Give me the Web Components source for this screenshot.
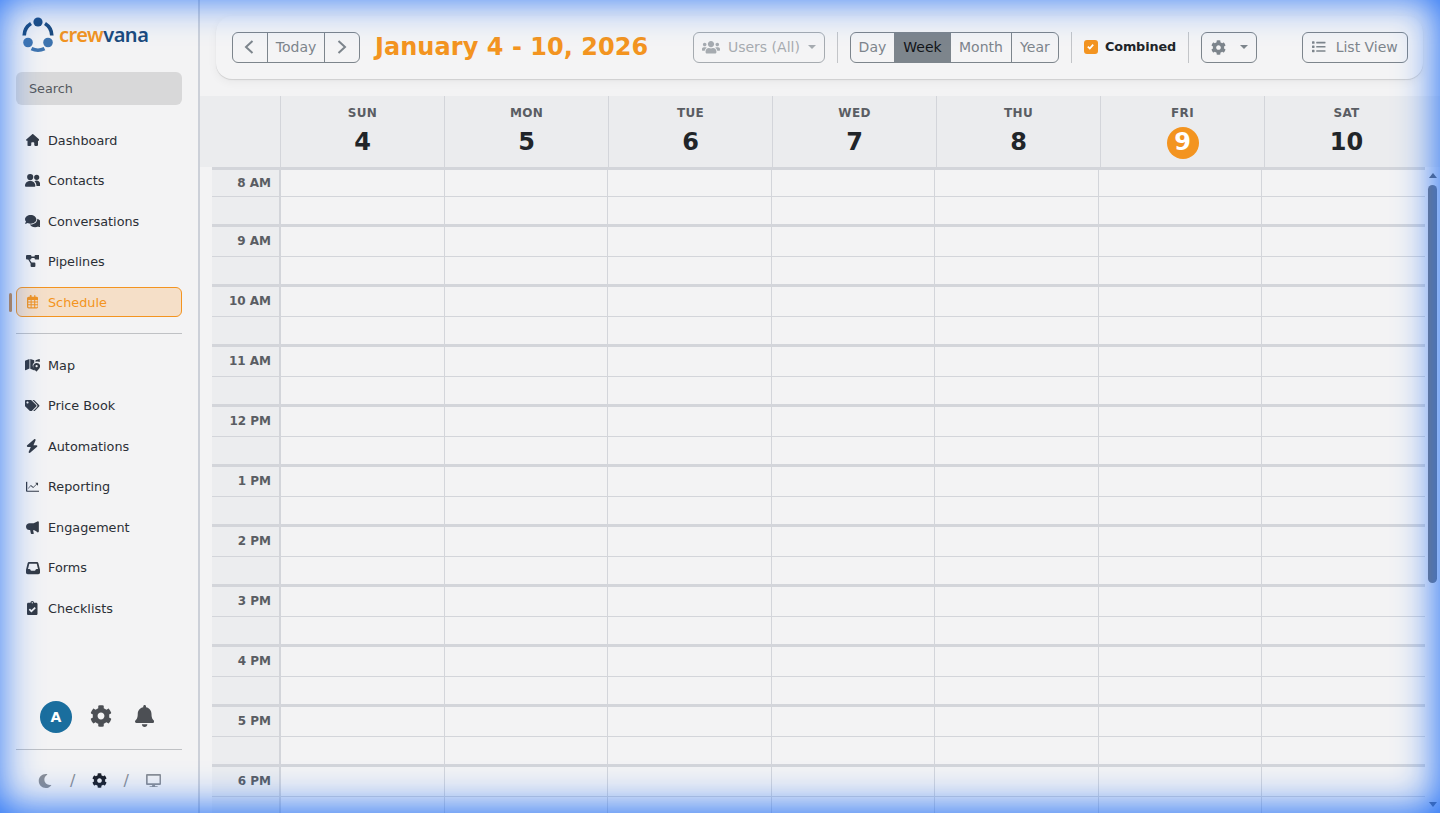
<!DOCTYPE html>
<html lang="en">
<head>
<meta charset="utf-8">
<title>Schedule</title>
<style>
  html, body { margin: 0; height: 100%; overflow: hidden; background: #f3f3f4; }
  body { font-family: "DejaVu Sans", sans-serif; color: #212529; }
</style>
</head>
<body>
<app-shell>
  <app-sidebar slot="side"></app-sidebar>
  <cal-toolbar slot="main"></cal-toolbar>
  <cal-header slot="main"></cal-header>
  <cal-body slot="main"></cal-body>
</app-shell>
<glow-frame></glow-frame>

<script>
// [viewBox width, path, viewBox height (512 when left out)]
const ICONS = {
  home: [576, 'M575.8 255.5c0 18-15 32.1-32 32.1h-32l.7 160.2c0 2.7-.2 5.4-.5 8.1V472c0 22.1-17.9 40-40 40H456c-1.1 0-2.2 0-3.3-.1c-1.4 .1-2.8 .1-4.2 .1H416 392c-22.1 0-40-17.9-40-40V448 384c0-17.7-14.3-32-32-32H256c-17.7 0-32 14.3-32 32v64 24c0 22.1-17.9 40-40 40H160 128.1c-1.5 0-3-.1-4.5-.2c-1.2 .1-2.4 .2-3.6 .2H104c-22.1 0-40-17.9-40-40V360c0-.9 0-1.9 .1-2.8V287.6H32c-18 0-32-14-32-32.1c0-9 3-17 10-24L266.4 8c7-7 15-8 22-8s15 2 21 7L564.8 231.5c8 7 12 15 11 24z'],
  friends: [15.3, 'M5.2 0a3.1 3.1 0 1 1 0 6.2a3.1 3.1 0 1 1 0-6.2zM0 11.8c0-2.9 2.3-4.9 5.2-4.9s5.2 2 5.2 4.9c0 .5-.3.9-.8.9H.8c-.5 0-.8-.4-.8-.9zM11.7.7a2.6 2.6 0 1 1 0 5.2a2.6 2.6 0 1 1 0-5.2zM11.7 6.6c2.2 0 3.6 1.7 3.6 4.3 0 .6-.3 1-.8 1h-3c0-2-.8-3.7-2.1-4.7.6-.4 1.4-.6 2.3-.6z', 12.7],
  users: [640, 'M96 224c35.3 0 64-28.7 64-64s-28.7-64-64-64-64 28.7-64 64 28.7 64 64 64zm448 0c35.3 0 64-28.7 64-64s-28.7-64-64-64-64 28.7-64 64 28.7 64 64 64zm32 32h-64c-17.6 0-33.5 7.1-45.1 18.6 40.3 22.1 68.9 62 75.1 109.4h66c17.7 0 32-14.3 32-32v-32c0-35.3-28.7-64-64-64zm-256 0c61.9 0 112-50.1 112-112S381.9 32 320 32 208 82.1 208 144s50.1 112 112 112zm76.8 32h-8.3c-20.8 10-43.9 16-68.5 16s-47.6-6-68.5-16h-8.3C179.6 288 128 339.6 128 403.2V432c0 26.5 21.5 48 48 48h288c26.5 0 48-21.5 48-48v-28.8c0-63.6-51.6-115.2-115.2-115.2zm-223.7-13.4C161.5 263.1 145.6 256 128 256H64c-35.3 0-64 28.7-64 64v32c0 17.7 14.3 32 32 32h65.9c6.3-47.4 34.9-87.3 75.2-109.4z'],
  comments: [576, 'M416 192c0-88.4-93.1-160-208-160S0 103.6 0 192c0 34.3 14.1 65.9 38 92-13.4 30.2-35.5 54.2-35.8 54.5-2.2 2.3-2.8 5.7-1.5 8.7S4.8 352 8 352c36.6 0 66.9-12.3 88.7-25 32.2 15.7 70.3 25 111.3 25 114.9 0 208-71.6 208-160zm122 220c23.9-26 38-57.7 38-92 0-66.9-53.5-124.2-129.3-148.1.9 6.6 1.3 13.3 1.3 20.1 0 105.9-107.7 192-240 192-10.8 0-21.3-.8-31.7-1.9C207.8 439.6 281.8 480 368 480c41 0 79.1-9.2 111.3-25 21.8 12.7 52.1 25 88.7 25 3.2 0 6.1-1.9 7.3-4.8 1.3-2.9.7-6.3-1.5-8.7-.3-.3-22.4-24.2-35.8-54.5z'],
  diagram: [14, 'M1 0h3.4a1 1 0 0 1 1 1v.6h3.2V1a1 1 0 0 1 1-1H13a1 1 0 0 1 1 1v2.6a1 1 0 0 1-1 1H9.6a1 1 0 0 1-1-1V3H5.4v.6a1 1 0 0 1-1 1H3.6l2 2.9h2.8a1 1 0 0 1 1 1v2.6a1 1 0 0 1-1 1H5.6a1 1 0 0 1-1-1V8.6L2.2 4.6H1a1 1 0 0 1-1-1V1a1 1 0 0 1 1-1z', 12.6],
  calendar: [448, 'M152 0c13 0 24 11 24 24v40h96V24c0-13 11-24 24-24s24 11 24 24v40h40c35 0 64 29 64 64v320c0 35-29 64-64 64H64c-35 0-64-29-64-64V128c0-35 29-64 64-64h40V24c0-13 11-24 24-24h24zM48 192v56h88v-56H48zm128 0v56h96v-56h-96zm136 0v56h88v-56h-88zM48 288v64h88v-64H48zm128 0v64h96v-64h-96zm136 0v64h88v-64h-88zM48 392v56c0 9 7 16 16 16h72v-72H48zm128 0v72h96v-72h-96zm136 0v72h72c9 0 16-7 16-16v-56h-88z'],
  map: [576, 'M20 96 L170 40 V400 L20 460 A14 14 0 0 1 0 446 V126 A32 32 0 0 1 20 96ZM200 40 L350 90 V180 C300 210 280 270 300 320 C310 350 340 400 360 430 V470 L200 410ZM400 90 L540 36 A14 14 0 0 1 560 50 V150 C530 130 450 120 400 150ZM440 190 C510 190 576 240 576 310 C576 370 500 460 450 500 C440 510 430 510 420 500 C370 460 310 370 310 310 C310 240 370 190 440 190ZM440 270 A42 42 0 1 0 440.1 354 A42 42 0 1 0 440 270Z'],
  tags: [640, 'M497.941 225.941L286.059 14.059A48 48 0 0 0 252.118 0H48C21.49 0 0 21.49 0 48v204.118a48 48 0 0 0 14.059 33.941l211.882 211.882c18.744 18.745 49.136 18.746 67.882 0l204.118-204.118c18.745-18.745 18.745-49.137 0-67.882zM112 160c-26.51 0-48-21.49-48-48s21.49-48 48-48 48 21.49 48 48-21.49 48-48 48zm513.941 133.823L421.823 497.941c-18.745 18.745-49.137 18.745-67.882 0l-.36-.36L527.64 323.522c16.999-16.999 26.36-39.6 26.36-63.64s-9.362-46.641-26.36-63.64L331.397 0h48.721a48 48 0 0 1 33.941 14.059l211.882 211.882c18.745 18.745 18.745 49.137 0 67.882z'],
  bolt: [448, 'M349.4 44.6c5.9-13.7 1.5-29.7-10.6-38.5s-28.6-8-39.9 1.8l-256 224c-10 8.8-13.6 22.9-8.9 35.3S50.7 288 64 288H175.5L98.6 467.4c-5.9 13.7-1.5 29.7 10.6 38.5s28.6 8 39.9-1.8l256-224c10-8.8 13.6-22.9 8.9-35.3s-16.6-20.7-30-20.7H272.5L349.4 44.6z'],
  chart: [512, 'M496 408H48V72c0-6-5-10-10-10H18C8 62 0 70 0 80v336c0 17.67 14.33 32 32 32h464c9 0 16-7 16-16v-8c0-9-7-16-16-16zM96 320l84-92 90 76 134-132 38 34c6 5 14 1 14-6V112c0-5-4-8-8-8h-84c-8 0-11 9-6 14l38 36-120 116-90-76-116 126z'],
  bullhorn: [512, 'M470 10c20 0 36 14 36 34v370c0 20-16 34-36 34s-30-10-44-24c-35-35-80-66-140-72v50l20 78c4 14-6 28-20 28h-70c-12 0-20-8-24-18l-30-136h-30C61 354 0 296 0 222S61 90 136 90h110c70 0 130-26 180-60 14-10 26-20 44-20z'],
  inbox: [512, 'M121 32C91.6 32 66 52 58.9 80.5L1.9 308.4C.6 313.5 0 318.7 0 323.9V416c0 35.3 28.7 64 64 64H448c35.3 0 64-28.7 64-64V323.9c0-5.2-.6-10.4-1.9-15.5l-57-227.9C446 52 420.4 32 391 32H121zm0 64H391l48 192H387.8c-12.1 0-23.2 6.8-28.6 17.7l-14.3 28.6c-5.4 10.8-16.5 17.7-28.6 17.7H195.8c-12.1 0-23.2-6.8-28.6-17.7l-14.3-28.6c-5.4-10.8-16.5-17.7-28.6-17.7H73L121 96z'],
  clipboard: [384, 'M336 64h-80c0-35.3-28.7-64-64-64s-64 28.7-64 64H48C21.5 64 0 85.5 0 112v352c0 26.5 21.5 48 48 48h288c26.5 0 48-21.5 48-48V112c0-26.5-21.5-48-48-48zM192 40c13.3 0 24 10.7 24 24s-10.7 24-24 24-24-10.7-24-24 10.7-24 24-24zm121.2 231.8l-143 141.8c-4.7 4.7-12.3 4.6-17-.1l-82.6-83.3c-4.7-4.7-4.6-12.3.1-17L99.1 285c4.7-4.7 12.3-4.6 17 .1l46 46.4 106-105.2c4.7-4.7 12.3-4.6 17 .1l28.2 28.4c4.7 4.8 4.6 12.3-.1 17z'],
  cog: [512, 'M487.4 315.7l-42.6-24.6c4.3-23.2 4.3-47 0-70.2l42.6-24.6c4.9-2.8 7.1-8.6 5.5-14-11.1-35.6-30-67.8-54.7-94.6-3.8-4.1-10-5.1-14.8-2.3L380.8 110c-17.9-15.4-38.5-27.3-60.8-35.1V25.8c0-5.6-3.9-10.5-9.4-11.7-36.7-8.2-74.3-7.8-109.2 0-5.5 1.2-9.4 6.1-9.4 11.7V75c-22.2 7.9-42.8 19.8-60.8 35.1L88.7 85.5c-4.9-2.8-11-1.9-14.8 2.3-24.7 26.7-43.6 58.9-54.7 94.6-1.7 5.4.6 11.2 5.5 14L67.3 221c-4.3 23.2-4.3 47 0 70.2l-42.6 24.6c-4.9 2.8-7.1 8.6-5.5 14 11.1 35.6 30 67.8 54.7 94.6 3.8 4.1 10 5.1 14.8 2.3l42.6-24.6c17.9 15.4 38.5 27.3 60.8 35.1v49.2c0 5.6 3.9 10.5 9.4 11.7 36.7 8.2 74.3 7.8 109.2 0 5.5-1.2 9.4-6.1 9.4-11.7v-49.2c22.2-7.9 42.8-19.8 60.8-35.1l42.6 24.6c4.9 2.8 11 1.9 14.8-2.3 24.7-26.7 43.6-58.9 54.7-94.6 1.5-5.5-.7-11.3-5.6-14.1zM256 336c-44.1 0-80-35.9-80-80s35.9-80 80-80 80 35.9 80 80-35.9 80-80 80z'],
  bell: [448, 'M224 512c35.32 0 63.97-28.65 63.97-64H160.03c0 35.35 28.65 64 63.97 64zm215.39-149.71c-19.32-20.76-55.47-51.99-55.47-154.29 0-77.7-54.48-139.9-127.94-155.16V32c0-17.67-14.32-32-31.98-32s-31.98 14.33-31.98 32v20.84C118.56 68.1 64.08 130.3 64.08 208c0 102.3-36.15 133.53-55.47 154.29-6 6.45-8.66 14.16-8.61 21.71.11 16.4 12.98 32 32.1 32h383.8c19.12 0 32-15.6 32.1-32 .05-7.55-2.61-15.27-8.61-21.71z'],
  moon: [512, 'M283.211 512c78.962 0 151.079-35.925 198.857-94.792 7.068-8.708-.639-21.43-11.562-19.35-124.203 23.654-238.262-71.576-238.262-196.954 0-72.222 38.662-138.635 101.498-174.394 9.686-5.512 7.25-20.197-3.756-22.23A258.156 258.156 0 0 0 283.211 0c-141.309 0-256 114.511-256 256 0 141.309 114.511 256 256 256z'],
  desktop: [576, 'M528 0H48C21.5 0 0 21.5 0 48v320c0 26.5 21.5 48 48 48h192l-16 48h-72c-13.3 0-24 10.7-24 24s10.7 24 24 24h272c13.3 0 24-10.7 24-24s-10.7-24-24-24h-72l-16-48h192c26.5 0 48-21.5 48-48V48c0-26.5-21.5-48-48-48zm-16 352H64V64h448v288z'],
  list: [512, 'M80 368H16a16 16 0 0 0-16 16v64a16 16 0 0 0 16 16h64a16 16 0 0 0 16-16v-64a16 16 0 0 0-16-16zm0-320H16A16 16 0 0 0 0 64v64a16 16 0 0 0 16 16h64a16 16 0 0 0 16-16V64a16 16 0 0 0-16-16zm0 160H16a16 16 0 0 0-16 16v64a16 16 0 0 0 16 16h64a16 16 0 0 0 16-16v-64a16 16 0 0 0-16-16zm416 176H176a16 16 0 0 0-16 16v32a16 16 0 0 0 16 16h320a16 16 0 0 0 16-16v-32a16 16 0 0 0-16-16zm0-320H176a16 16 0 0 0-16 16v32a16 16 0 0 0 16 16h320a16 16 0 0 0 16-16V80a16 16 0 0 0-16-16zm0 160H176a16 16 0 0 0-16 16v32a16 16 0 0 0 16 16h320a16 16 0 0 0 16-16v-32a16 16 0 0 0-16-16z']
};

/* Small helper so every class can set its shadow markup in one line. */
class Base extends HTMLElement {
  render(html) {
    this.attachShadow({ mode: 'open' });
    this.shadowRoot.innerHTML = html;
  }
}

class AppIcon extends Base {
  connectedCallback() {
    const [w, d, h = 512] = ICONS[this.getAttribute('name')];
    this.render(`
      <style>
        :host { display: inline-flex; align-items: center; justify-content: center; flex: none; }
        svg { display: block; height: var(--h, 14px); fill: currentColor; }
      </style>
      <svg viewBox="0 0 ${w} ${h}"><path d="${d}"/></svg>`);
  }
}
customElements.define('app-icon', AppIcon);

class AppShell extends Base {
  constructor() {
    super();
    this.render(`
      <style>
        :host { display: flex; height: 100vh; width: 100vw; overflow: hidden; background: #f3f3f4; }
        .side { flex: none; width: 198px; border-right: 2px solid #ccd0d8; display: flex; }
        .main { flex: 1; min-width: 0; display: flex; flex-direction: column; }
      </style>
      <div class="side"><slot name="side"></slot></div>
      <div class="main"><slot name="main"></slot></div>`);
  }
}
customElements.define('app-shell', AppShell);

class CrewLogo extends Base {
  constructor() {
    super();
    this.render(`
      <style>
        :host { display: flex; align-items: center; gap: 5px; height: 36px; }
        svg { display: block; flex: none; }
        .t { font: 600 20px/1 "Noto Sans", sans-serif; letter-spacing: -0.5px; }
        .a { color: #f39420; }
        .b { color: #1b4a7c; }
      </style>
      <svg width="32" height="36" viewBox="0 0 32 36">
        <circle cx="16" cy="5" r="4.6" fill="#1b4a7c"/>
        <circle cx="6" cy="25.5" r="4.8" fill="#3f74ae"/>
        <circle cx="26" cy="25.5" r="4.8" fill="#3f74ae"/>
        <g fill="none" stroke-width="3.6">
          <path d="M2.2 18.5 A14.5 14.5 0 0 1 9 6.5" stroke="#1b4a7c"/>
          <path d="M29.8 18.5 A14.5 14.5 0 0 0 23 6.5" stroke="#1b4a7c"/>
          <path d="M9.5 31.6 A14.5 14.5 0 0 0 22.5 31.6" stroke="#3f74ae"/>
        </g>
      </svg>
      <span class="t"><span class="a">crew</span><span class="b">vana</span></span>`);
  }
}
customElements.define('crew-logo', CrewLogo);

class NavItem extends Base {
  connectedCallback() {
    this.render(`
      <style>
        :host {
          display: flex; align-items: center; height: 30px; box-sizing: border-box;
          margin: 0 16px; position: relative; font-size: 12.8px; color: #2b2f36; border-radius: 6px;
          border: 1px solid transparent;
        }
        :host([active]) { border-color: #f39420; background: #f5dfc8; color: #f39420; }
        :host([active])::before {
          content: ""; position: absolute; left: -8px; top: 5px; width: 3px; height: 19px;
          border-radius: 2px; background: #d08a3c;
        }
        .ic { width: 16px; margin-left: 7.5px; margin-right: 7.5px; display: flex; justify-content: center; color: #343a43; }
        :host([active]) .ic { color: #f39420; }
        app-icon { --h: ${this.getAttribute('h') || 12}px; }
      </style>
      <span class="ic"><app-icon name="${this.getAttribute('icon')}"></app-icon></span><slot></slot>`);
  }
}
customElements.define('nav-item', NavItem);

class AppSidebar extends Base {
  constructor() {
    super();
    this.render(`
      <style>
        :host { display: flex; flex-direction: column; width: 198px; }
        crew-logo { margin: 17px 0 19px 22px; }
        .search {
          margin: 0 16px 20px; height: 33px; box-sizing: border-box; padding: 0 13px; display: flex;
          align-items: center; background: #d8d8d9; border-radius: 6px; font-size: 12.8px; color: #55585d;
        }
        .group { display: flex; flex-direction: column; gap: 10.5px; }
        hr { border: 0; height: 1px; background: #bfc1c4; margin: 16px 16px; }
        .foot { margin-top: auto; }
        .user { display: flex; align-items: center; height: 32px; padding-left: 40px; color: #4c4f54; margin-bottom: 16px; }
        .avatar {
          width: 32px; height: 32px; border-radius: 50%; background: #1a6e9e; color: #fff;
          font-weight: 700; font-size: 14px; display: flex; align-items: center; justify-content: center;
        }
        .user .cog { --h: 22px; margin: -2px 0 0 18px; }
        .user .bell { --h: 22px; margin: -2px 0 0 23px; }
        .foot hr { margin: 0 16px; }
        .theme { display: flex; align-items: center; height: 63px; padding: 0 0 2px 38px; box-sizing: border-box; color: #8b8e93; font-size: 16px; }
        .theme .moon { --h: 14px; }
        .theme .s1 { margin-left: 18px; }
        .theme .s2 { margin-left: 16px; }
        .theme .cog { --h: 15px; color: #1c1f26; margin-left: 17px; }
        .theme .desk { --h: 13.5px; margin-left: 17px; }
      </style>
      <crew-logo></crew-logo>
      <div class="search">Search</div>
      <div class="group">
        <nav-item icon="home" h="12">Dashboard</nav-item>
        <nav-item icon="friends" h="12.7">Contacts</nav-item>
        <nav-item icon="comments" h="14">Conversations</nav-item>
        <nav-item icon="diagram" h="12.6">Pipelines</nav-item>
        <nav-item icon="calendar" h="13.5" active>Schedule</nav-item>
      </div>
      <hr>
      <div class="group">
        <nav-item icon="map" h="13.5">Map</nav-item>
        <nav-item icon="tags" h="11.5">Price Book</nav-item>
        <nav-item icon="bolt" h="14">Automations</nav-item>
        <nav-item icon="chart" h="13.5">Reporting</nav-item>
        <nav-item icon="bullhorn" h="13">Engagement</nav-item>
        <nav-item icon="inbox" h="14">Forms</nav-item>
        <nav-item icon="clipboard" h="14">Checklists</nav-item>
      </div>
      <div class="foot">
        <div class="user">
          <div class="avatar">A</div>
          <app-icon class="cog" name="cog"></app-icon>
          <app-icon class="bell" name="bell"></app-icon>
        </div>
        <hr>
        <div class="theme">
          <app-icon class="moon" name="moon"></app-icon>
          <span class="s1">/</span>
          <app-icon class="cog" name="cog"></app-icon>
          <span class="s2">/</span>
          <app-icon class="desk" name="desktop"></app-icon>
        </div>
      </div>`);
  }
}
customElements.define('app-sidebar', AppSidebar);

/* Outline button used on the toolbar. */
class ToolBtn extends Base {
  constructor() {
    super();
    this.render(`
      <style>
        :host {
          display: flex; align-items: center; justify-content: center; gap: 8px; box-sizing: border-box;
          height: 31px; padding-bottom: 1px; border: 1px solid #7d858c; border-radius: 6px; color: #7d858c; font-size: 14px;
        }
        :host([on]) { background: #7d858c; color: #111418; }
        :host([seg]) { border-radius: 0; }
        :host([seg="first"]) { border-radius: 6px 0 0 6px; }
        :host([seg="last"]) { border-radius: 0 6px 6px 0; }
        :host([off]) { opacity: .65; }
      </style>
      <slot></slot>`);
  }
}
customElements.define('tool-btn', ToolBtn);

class CalToolbar extends Base {
  constructor() {
    super();
    this.render(`
      <style>
        :host {
          display: flex; align-items: center; box-sizing: border-box; flex: none;
          height: 63px; margin: 16px 17px 17px 16px; padding: 0 15px 0 16px; background: #f4f4f5;
          border-radius: 16px; box-shadow: 0 1px 1px rgba(0,0,0,.12), 0 3px 10px rgba(0,0,0,.05);
        }
        .grp { display: flex; }
        .grp tool-btn + tool-btn { margin-left: -1px; }
        .prev, .next { width: 36px; }
        .prev svg { margin-left: -2px; }
        .today { width: 58px; }
        svg.ch { width: 10px; height: 14px; fill: none; stroke: currentColor; stroke-width: 2; }
        h1 { margin: 0 0 2px 15px; font-size: 24px; line-height: 1; font-weight: 700; color: #f39420; white-space: nowrap; letter-spacing: .05px; }
        .users { width: 132px; margin-left: auto; }
        .users app-icon { --h: 14.4px; }
        .caret { width: 0; height: 0; border: 4px solid transparent; border-top-color: currentColor; border-bottom: 0; margin-left: 0; }
        .sep { width: 1px; height: 31px; background: #c3c5c8; margin: 0 12px; flex: none; }
        .d { width: 46px; } .w { width: 57px; } .m { width: 62px; } .y { width: 48px; }
        .d { width: 45px; }
        .chk {
          width: 14px; height: 14px; border-radius: 3px; background: #f39420; display: flex;
          align-items: center; justify-content: center; flex: none; margin-bottom: 2px;
        }
        .chk svg { width: 9px; height: 9px; fill: none; stroke: #fff; stroke-width: 2; }
        .combined { font-size: 12.8px; font-weight: 700; color: #212529; margin: 0 0 2px 7px; letter-spacing: -.12px; }
        .gear { width: 56px; gap: 14px; }
        .gear app-icon { --h: 15px; }
        .listv { width: 106px; margin-left: 45px; gap: 10px; }
        .listv app-icon { --h: 13.5px; }
      </style>
      <div class="grp">
        <tool-btn class="prev" seg="first" aria-label="Previous"><svg class="ch" viewBox="0 0 10 14"><path d="M8.5 1 L2 7 L8.5 13"/></svg></tool-btn>
        <tool-btn class="today" seg="mid">Today</tool-btn>
        <tool-btn class="next" seg="last" aria-label="Next"><svg class="ch" viewBox="0 0 10 14"><path d="M1.5 1 L8 7 L1.5 13"/></svg></tool-btn>
      </div>
      <h1>January 4 - 10, 2026</h1>
      <tool-btn class="users" off><app-icon name="users"></app-icon>Users (All)<span class="caret"></span></tool-btn>
      <span class="sep"></span>
      <div class="grp">
        <tool-btn class="d" seg="first">Day</tool-btn>
        <tool-btn class="w" seg="mid" on>Week</tool-btn>
        <tool-btn class="m" seg="mid">Month</tool-btn>
        <tool-btn class="y" seg="last">Year</tool-btn>
      </div>
      <span class="sep"></span>
      <span class="chk"><svg viewBox="0 0 10 10"><path d="M2 5.2 L4.2 7.2 L8 3"/></svg></span>
      <span class="combined">Combined</span>
      <span class="sep"></span>
      <tool-btn class="gear"><app-icon name="cog"></app-icon><span class="caret"></span></tool-btn>
      <tool-btn class="listv"><app-icon name="list"></app-icon>List View</tool-btn>`);
  }
}
customElements.define('cal-toolbar', CalToolbar);

class CalHeader extends Base {
  constructor() {
    super();
    const days = [['SUN', 4], ['MON', 5], ['TUE', 6], ['WED', 7], ['THU', 8], ['FRI', 9, true], ['SAT', 10]];
    this.render(`
      <style>
        :host { display: grid; flex: none; grid-template-columns: 80px repeat(7, 164px) 1fr; height: 71px; background: #ebecee; }
        .day { border-left: 1px solid #d3d5da; display: flex; flex-direction: column; align-items: center; }
        .n { font-size: 12px; font-weight: 700; color: #5a5d63; margin-top: 10px; line-height: 14px; letter-spacing: .3px; }
        .d { font-size: 24px; font-weight: 700; color: #212529; height: 32px; min-width: 32px; margin-top: 7px; line-height: 30px; text-align: center; }
        .today { background: #f39420; color: #fff; border-radius: 50%; line-height: 31px; width: 32px; }
      </style>
      <span></span>
      ${days.map(([n, d, t]) => `<div class="day"><span class="n">${n}</span><span class="d${t ? ' today' : ''}">${d}</span></div>`).join('')}
      <span></span>`);
  }
}
customElements.define('cal-header', CalHeader);

/* One hour of the week grid: a label and seven half hour pairs of cells. */
class CalHour extends Base {
  connectedCallback() {
    const cells = Array(7).fill('<div class="c"></div>').join('');
    this.render(`
      <style>
        :host {
          display: grid; grid-template-columns: 68px repeat(7, 1fr); grid-template-rows: var(--top, 29px) 28px;
          border-top: 3px solid #d3d5da; flex: none;
        }
        .l {
          background: #ecedef; border-right: 1px solid #d3d5da; box-sizing: border-box;
          text-align: right; padding: var(--pad, 5px) 8px 0 0; font-size: 12px; line-height: 18px; font-weight: 700; color: #5a5d63;
        }
        .g { background: #ecedef; border-right: 1px solid #d3d5da; border-top: 1px solid #d3d5da; box-sizing: border-box; }
        .c { border-left: 1px solid #d3d5da; }
        .c.low { border-top: 1px solid #d3d5da; }
      </style>
      <div class="l">${this.getAttribute('label')}</div>${cells}
      <div class="g"></div>${Array(7).fill('<div class="c low"></div>').join('')}`);
  }
}
customElements.define('cal-hour', CalHour);

class CalScrollbar extends Base {
  constructor() {
    super();
    this.render(`
      <style>
        :host { flex: none; width: 15px; display: flex; flex-direction: column; align-items: center; }
        .up, .down { width: 0; height: 0; border: 4px solid transparent; flex: none; }
        .up { border-bottom: 5px solid #666; border-top: 0; margin-top: 6px; }
        .thumb { width: 9px; height: 398px; margin-top: 7px; border-radius: 5px; background: #7a7a7a; flex: none; }
        .down { border-top: 5px solid #666; border-bottom: 0; margin-top: auto; margin-bottom: 6px; }
      </style>
      <div class="up"></div><div class="thumb"></div><div class="down"></div>`);
  }
}
customElements.define('cal-scrollbar', CalScrollbar);

class CalBody extends Base {
  constructor() {
    super();
    const hours = ['8 AM', '9 AM', '10 AM', '11 AM', '12 PM', '1 PM', '2 PM', '3 PM', '4 PM', '5 PM', '6 PM'];
    this.render(`
      <style>
        :host { flex: 1; min-height: 0; display: flex; padding-left: 12px; }
        .rows { flex: 1; min-width: 0; display: flex; flex-direction: column; overflow: hidden; }
        .first { --top: 26px; --pad: 4px; }
      </style>
      <div class="rows">${hours.map((h, i) => `<cal-hour class="${i ? '' : 'first'}" label="${h}"></cal-hour>`).join('')}</div>
      <cal-scrollbar></cal-scrollbar>`);
  }
}
customElements.define('cal-body', CalBody);

/* The blue glow that lies over the whole page edge. */
class GlowFrame extends Base {
  constructor() {
    super();
    this.render(`
      <style>
        :host {
          position: fixed; inset: 0; pointer-events: none; z-index: 10;
          box-shadow: inset -2px -3px 40px rgb(23, 105, 247);
        }
      </style>`);
  }
}
customElements.define('glow-frame', GlowFrame);
</script>
</body>
</html>
